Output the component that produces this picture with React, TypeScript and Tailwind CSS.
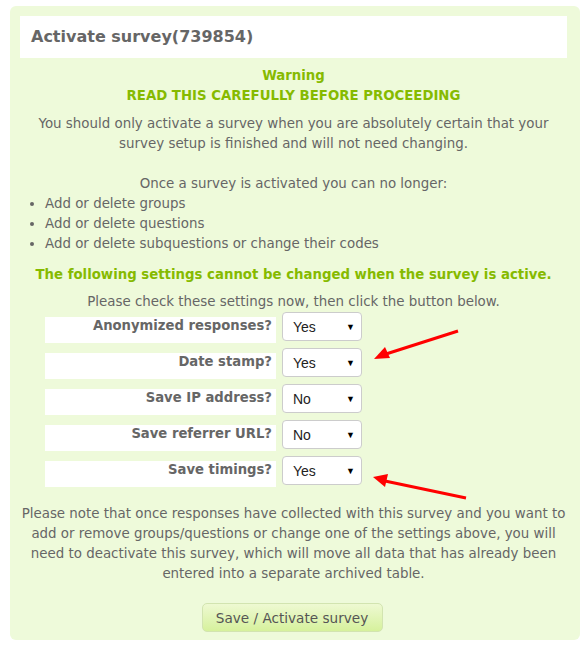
import React from "react";

const rows: { label: string; value: string }[] = [
  { label: "Anonymized responses?", value: "Yes" },
  { label: "Date stamp?", value: "Yes" },
  { label: "Save IP address?", value: "No" },
  { label: "Save referrer URL?", value: "No" },
  { label: "Save timings?", value: "Yes" },
];

function FakeSelect({ value }: { value: string }) {
  return (
    <div className="w-[80px] h-[29px] bg-white border border-[#cccccc] rounded-[4px] flex items-center justify-between pl-[10px] pr-[6px] text-[14px] text-[#222] [font-family:'Liberation_Sans',Arial,sans-serif]">
      <span>{value}</span>
      <span className="text-[9px] text-black">▼</span>
    </div>
  );
}

export default function App() {
  return (
    <div className="relative w-[587px] h-[646px] bg-white [font-family:'DejaVu_Sans',Verdana,sans-serif] text-[13.4px] leading-[20px] text-[#666]">
      <div className="absolute left-[10px] top-[6px] w-[570px] h-[634px] bg-[#eefada] rounded-[6px]" />
      <div className="relative pt-[16px] px-[20px]">
        <div className="h-[42px] bg-white flex items-center pl-[11px]">
          <h1 className="text-[16px] font-bold text-[#666]">Activate survey(739854)</h1>
        </div>
        <div className="mt-[8px] text-center font-bold text-[#86ba00] text-[13.3px]">
          <div>Warning</div>
          <div>READ THIS CAREFULLY BEFORE PROCEEDING</div>
        </div>
        <p className="mt-[8px] text-center">
          You should only activate a survey when you are absolutely certain that your
          <br />
          survey setup is finished and will not need changing.
        </p>
        <p className="mt-[20px] text-center">Once a survey is activated you can no longer:</p>
        <ul className="list-disc pl-[25px]">
          <li>Add or delete groups</li>
          <li>Add or delete questions</li>
          <li>Add or delete subquestions or change their codes</li>
        </ul>
        <p className="mt-[11px] text-center font-bold text-[#86ba00] text-[13.3px]">
          The following settings cannot be changed when the survey is active.
        </p>
        <p className="mt-[7px] text-center">Please check these settings now, then click the button below.</p>
        <div className="flex flex-col gap-[7px] pl-[25px]">
          {rows.map((r) => (
            <div key={r.label} className="h-[29px] flex items-start gap-[6px]">
              <div className="mt-[5px] w-[231px] h-[26px] bg-white text-right pr-[4px] font-bold leading-[18px] text-[13.2px]">
                {r.label}
              </div>
              <FakeSelect value={r.value} />
            </div>
          ))}
        </div>
        <p className="mt-[19px] text-center">
          Please note that once responses have collected with this survey and you want to
          <br />
          add or remove groups/questions or change one of the settings above, you will
          <br />
          need to deactivate this survey, which will move all data that has already been
          <br />
          entered into a separate archived table.
        </p>
        <div className="mt-[19px] flex justify-center">
          <button className="-ml-[3px] w-[181px] h-[29px] rounded-[5px] border border-[#d2e4b0] bg-gradient-to-b from-[#eef9d2] to-[#d6f19c] text-[13.6px] text-[#555] [font-family:'DejaVu_Sans',Verdana,sans-serif]">
            Save / Activate survey
          </button>
        </div>
      </div>
      <svg className="absolute left-0 top-0 pointer-events-none" width="587" height="646">
        <line x1="458" y1="331" x2="386" y2="354" stroke="#ff0000" strokeWidth="3" />
        <polygon points="374,359 385,347 390,358" fill="#ff0000" />
        <line x1="466" y1="498" x2="385" y2="481" stroke="#ff0000" strokeWidth="3" />
        <polygon points="373,477 388,474 385,487" fill="#ff0000" />
      </svg>
    </div>
  );
}
